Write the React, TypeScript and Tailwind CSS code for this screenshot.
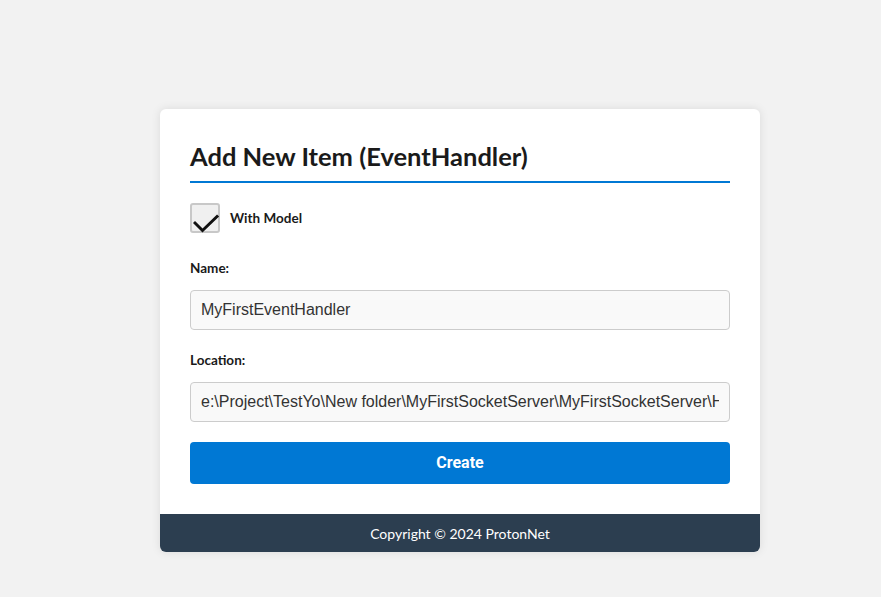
export default function App() {
  return (
    <div className="min-h-[597px] w-full bg-[#f2f2f2] pt-[109px]" style={{ fontFamily: "Lato, 'Open Sans', sans-serif" }}>
      <div className="ml-[160px] w-[600px] overflow-hidden rounded-[6px] bg-white shadow-[0_0_10px_rgba(0,0,0,0.1)]">
        <div className="px-[30px] pb-[30px] pt-[30px]">
          <h2 className="border-b-2 border-[#0078d4] pb-[8px] text-[25.5px] font-bold leading-[34px] text-[#1a1a1a]">
            Add New Item (EventHandler)
          </h2>
          <label className="mt-[20px] flex items-center gap-[10px]">
            <span className="relative block h-[30px] w-[30px] rounded-[3px] border-2 border-[#c8c8c8] bg-[#f0f0f0]">
              <svg className="absolute left-[1px] top-[7px]" width="28" height="24" viewBox="0 0 28 24" fill="none">
                <path d="M2 11 L9.5 18.5 L24 4.5" stroke="#111" strokeWidth="3" strokeLinecap="square" />
              </svg>
            </span>
            <span className="text-[13.5px] font-bold text-[#1a1a1a]">With Model</span>
          </label>
          <div className="mt-[26px] text-[13.5px] font-bold leading-[18px] text-[#1a1a1a]">Name:</div>
          <input
            readOnly
            value="MyFirstEventHandler"
            className="mt-[13px] block h-[40px] w-full rounded-[4px] border border-[#cccccc] bg-[#f9f9f9] px-[10px] text-[16px] text-[#333] outline-none"
            style={{ fontFamily: "'Liberation Sans', Arial, sans-serif" }}
          />
          <div className="mt-[21px] text-[13.5px] font-bold leading-[18px] text-[#1a1a1a]">Location:</div>
          <input
            readOnly
            value="e:\Project\TestYo\New folder\MyFirstSocketServer\MyFirstSocketServer\Handlers"
            className="mt-[13px] block h-[40px] w-full rounded-[4px] border border-[#cccccc] bg-[#f9f9f9] px-[10px] text-[16px] text-[#333] outline-none"
            style={{ fontFamily: "'Liberation Sans', Arial, sans-serif" }}
          />
          <button
            className="mt-[20px] block h-[42px] w-full rounded-[4px] bg-[#0078d4] text-[16px] font-bold text-white"
            style={{ fontFamily: "Roboto, sans-serif" }}
          >
            Create
          </button>
        </div>
        <div className="flex h-[38px] items-center justify-center bg-[#2c3e50] text-[14px] text-white">
          Copyright © 2024 ProtonNet
        </div>
      </div>
    </div>
  );
}
